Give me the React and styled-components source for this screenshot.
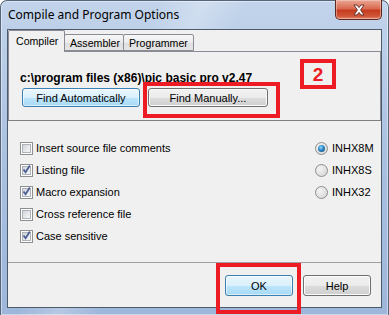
import React from 'react';
import styled, { createGlobalStyle } from 'styled-components';

const GlobalStyle = createGlobalStyle`
  html, body {
    margin: 0;
    padding: 0;
    background: #fff;
  }
  body {
    font-family: "Liberation Sans", Arial, sans-serif;
    font-size: 11px;
    color: #000;
  }
`;

const Window = styled.div`
  position: relative;
  box-sizing: border-box;
  width: 389px;
  height: 315px;
  display: flex;
  flex-direction: column;
  padding: 0 6px 7px 6px;
  border: 1px solid #56657a;
  border-bottom: none;
  border-radius: 7px 7px 0 0;
  background:
    linear-gradient(115deg, rgba(255,255,255,0) 30%, rgba(255,255,255,0.25) 38%, rgba(255,255,255,0) 46%),
    linear-gradient(180deg, #c2d4eb 0%, #abc2e1 45%, #9db6da 100%);
  box-shadow: inset 0 0 0 1px rgba(255, 255, 255, 0.45);
`;

const TitleBar = styled.div`
  height: 28px;
  display: flex;
  justify-content: space-between;
  align-items: flex-start;
`;

const Title = styled.div`
  margin: 6px 0 0 1px;
  font-family: "Noto Sans", "Liberation Sans", sans-serif;
  font-size: 12px;
  line-height: 16px;
  color: #000;
`;

const CloseButton = styled.div`
  margin-top: -1px;
  width: 47px;
  height: 20px;
  box-sizing: border-box;
  display: flex;
  align-items: center;
  justify-content: center;
  border: 1px solid #5a2a22;
  border-top: none;
  border-radius: 0 0 5px 5px;
  background: linear-gradient(180deg, #e9a895 0%, #da6a50 45%, #c63b1f 55%, #cf5538 85%, #e58a6c 100%);
  box-shadow: inset 0 0 0 1px rgba(255, 220, 210, 0.45);
`;

const Client = styled.div`
  flex: 1;
  display: flex;
  flex-direction: column;
  border: 1px solid #4d5a6b;
  background: #f0f0f0;
`;

const TabStrip = styled.div`
  height: 21px;
  display: flex;
  align-items: flex-end;
`;

const Tab = styled.div`
  position: relative;
  box-sizing: border-box;
  width: ${(p) => p.$w}px;
  height: ${(p) => (p.$active ? 22 : 17)}px;
  margin-left: ${(p) => (p.$first ? 0 : -1)}px;
  margin-bottom: ${(p) => (p.$active ? -1 : 0)}px;
  z-index: ${(p) => (p.$active ? 2 : 1)};
  padding: ${(p) => (p.$active ? '4px 0 0 7px' : '2px 0 0 5px')};
  border: 1px solid #898c95;
  border-bottom: ${(p) => (p.$active ? 'none' : '1px solid #898c95')};
  border-radius: 2px 2px 0 0;
  background: ${(p) =>
    p.$active ? '#f0f0f0' : 'linear-gradient(180deg, #f7f7f7 0%, #ebebeb 50%, #dedede 51%, #e6e6e6 100%)'};
  font-size: 10.6px;
  line-height: 13px;
  white-space: nowrap;
`;

const TabPage = styled.div`
  box-sizing: border-box;
  height: 70px;
  border: 1px solid #898c95;
  border-bottom-color: #7f7f7f;
  padding: 19px 0 0 11px;
`;

const PathLabel = styled.div`
  font-weight: bold;
  font-size: 12px;
  line-height: 14px;
`;

const ButtonRow = styled.div`
  display: flex;
  gap: 8px;
  margin: 3px 0 0 2px;
`;

const Button = styled.div`
  box-sizing: border-box;
  width: ${(p) => p.$w}px;
  height: ${(p) => p.$h}px;
  display: flex;
  align-items: center;
  justify-content: center;
  border: 1px solid ${(p) => (p.$primary ? '#3c7fb1' : '#707070')};
  border-radius: 3px;
  background: ${(p) =>
    p.$primary
      ? 'linear-gradient(180deg, #eaf6fd 0%, #d9f0fc 50%, #bee6fd 51%, #a7d9f5 100%)'
      : 'linear-gradient(180deg, #f2f2f2 0%, #ebebeb 50%, #dddddd 51%, #cfcfcf 100%)'};
  box-shadow: inset 0 0 0 1px ${(p) => (p.$primary ? 'rgba(255,255,255,0.55)' : '#fbfbfb')};
  color: #000;
  font-size: 11px;
`;

const Options = styled.div`
  box-sizing: border-box;
  height: 142px;
  display: flex;
  padding-top: 16px;
  border-bottom: 1px solid #a0a0a0;
`;

const CheckColumn = styled.div`
  flex: 1;
  padding-left: 12px;
`;

const RadioColumn = styled.div`
  width: 66px;
`;

const OptionRow = styled.div`
  height: 22px;
  display: flex;
  align-items: center;
  gap: ${(p) => p.$gap}px;
  white-space: nowrap;
`;

const CheckBox = styled.div`
  box-sizing: border-box;
  width: 13px;
  height: 13px;
  border: 1px solid #8e8f8f;
  background: #fff;
  padding: 1px;
  display: flex;
`;

const CheckInner = styled.div`
  flex: 1;
  position: relative;
  background: linear-gradient(135deg, #cfd3d8 0%, #e9eaec 60%, #f6f6f6 100%);
  border: 1px solid #aeb3b9;
  svg {
    position: absolute;
    left: -2px;
    top: -3px;
  }
`;

const Radio = styled.div`
  box-sizing: border-box;
  width: 13px;
  height: 13px;
  border-radius: 50%;
  border: 1px solid #8e8f8f;
  background: radial-gradient(circle at 35% 35%, #f4f4f4 0%, #dcdcdc 70%, #cfcfcf 100%);
  display: flex;
  align-items: center;
  justify-content: center;
`;

const RadioDot = styled.div`
  width: 7px;
  height: 7px;
  border-radius: 50%;
  background: radial-gradient(circle at 40% 35%, #8fd6ff 0%, #2f86c4 45%, #0f3f6c 100%);
`;

const Footer = styled.div`
  flex: 1;
  display: flex;
  justify-content: flex-end;
  align-items: flex-start;
  gap: 10px;
  padding: 12px 10px 0 0;
`;

const RedBox = styled.div`
  position: absolute;
  box-sizing: border-box;
  left: ${(p) => p.$x - 1}px;
  top: ${(p) => p.$y - 1}px;
  width: ${(p) => p.$w}px;
  height: ${(p) => p.$h}px;
  border: 4px solid #ed1c24;
  display: flex;
  align-items: center;
  justify-content: center;
  z-index: 5;
`;

const StepNumber = styled.span`
  color: #ed1c24;
  font-family: "Liberation Sans", Arial, sans-serif;
  font-weight: bold;
  font-size: 19px;
  line-height: 19px;
`;

const checks = [
  { label: 'Insert source file comments', on: false },
  { label: 'Listing file', on: true },
  { label: 'Macro expansion', on: true },
  { label: 'Cross reference file', on: false },
  { label: 'Case sensitive', on: true },
];

const formats = [
  { label: 'INHX8M', on: true },
  { label: 'INHX8S', on: false },
  { label: 'INHX32', on: false },
];

function Check({ on }) {
  return (
    <CheckBox>
      <CheckInner>
        {on && (
          <svg width="11" height="11" viewBox="0 0 11 11">
            <path d="M2.5 5.5 L4.6 8.2 L8.8 1.6" fill="none" stroke="#4b5f94" strokeWidth="1.8" />
          </svg>
        )}
      </CheckInner>
    </CheckBox>
  );
}

export default function App() {
  return (
    <>
      <GlobalStyle />
      <Window>
        <TitleBar>
          <Title>Compile and Program Options</Title>
          <CloseButton>
            <svg width="14" height="12" viewBox="0 0 14 12">
              <path
                d="M2 1 L5 1 L7 3.6 L9 1 L12 1 L8.6 6 L12 11 L9 11 L7 8.4 L5 11 L2 11 L5.4 6 Z"
                fill="#fff"
                stroke="#5b2a22"
                strokeWidth="0.9"
              />
            </svg>
          </CloseButton>
        </TitleBar>
        <Client>
          <TabStrip>
            <Tab $w={57} $active $first>Compiler</Tab>
            <Tab $w={60}>Assembler</Tab>
            <Tab $w={71}>Programmer</Tab>
          </TabStrip>
          <TabPage>
            <PathLabel>c:\program files (x86)\pic basic pro v2.47</PathLabel>
            <ButtonRow>
              <Button $w={118} $h={19} $primary>Find Automatically</Button>
              <Button $w={120} $h={19}>Find Manually...</Button>
            </ButtonRow>
          </TabPage>
          <Options>
            <CheckColumn>
              {checks.map((c) => (
                <OptionRow key={c.label} $gap={3}>
                  <Check on={c.on} />
                  <span>{c.label}</span>
                </OptionRow>
              ))}
            </CheckColumn>
            <RadioColumn>
              {formats.map((f) => (
                <OptionRow key={f.label} $gap={4}>
                  <Radio>{f.on && <RadioDot />}</Radio>
                  <span>{f.label}</span>
                </OptionRow>
              ))}
            </RadioColumn>
          </Options>
          <Footer>
            <Button $w={68} $h={21} $primary>OK</Button>
            <Button $w={68} $h={21}>Help</Button>
          </Footer>
        </Client>
        <RedBox $x={143} $y={82} $w={137} $h={36} />
        <RedBox $x={300} $y={59} $w={36} $h={30}>
          <StepNumber>2</StepNumber>
        </RedBox>
        <RedBox $x={216} $y={263} $w={85} $h={51} />
      </Window>
    </>
  );
}
